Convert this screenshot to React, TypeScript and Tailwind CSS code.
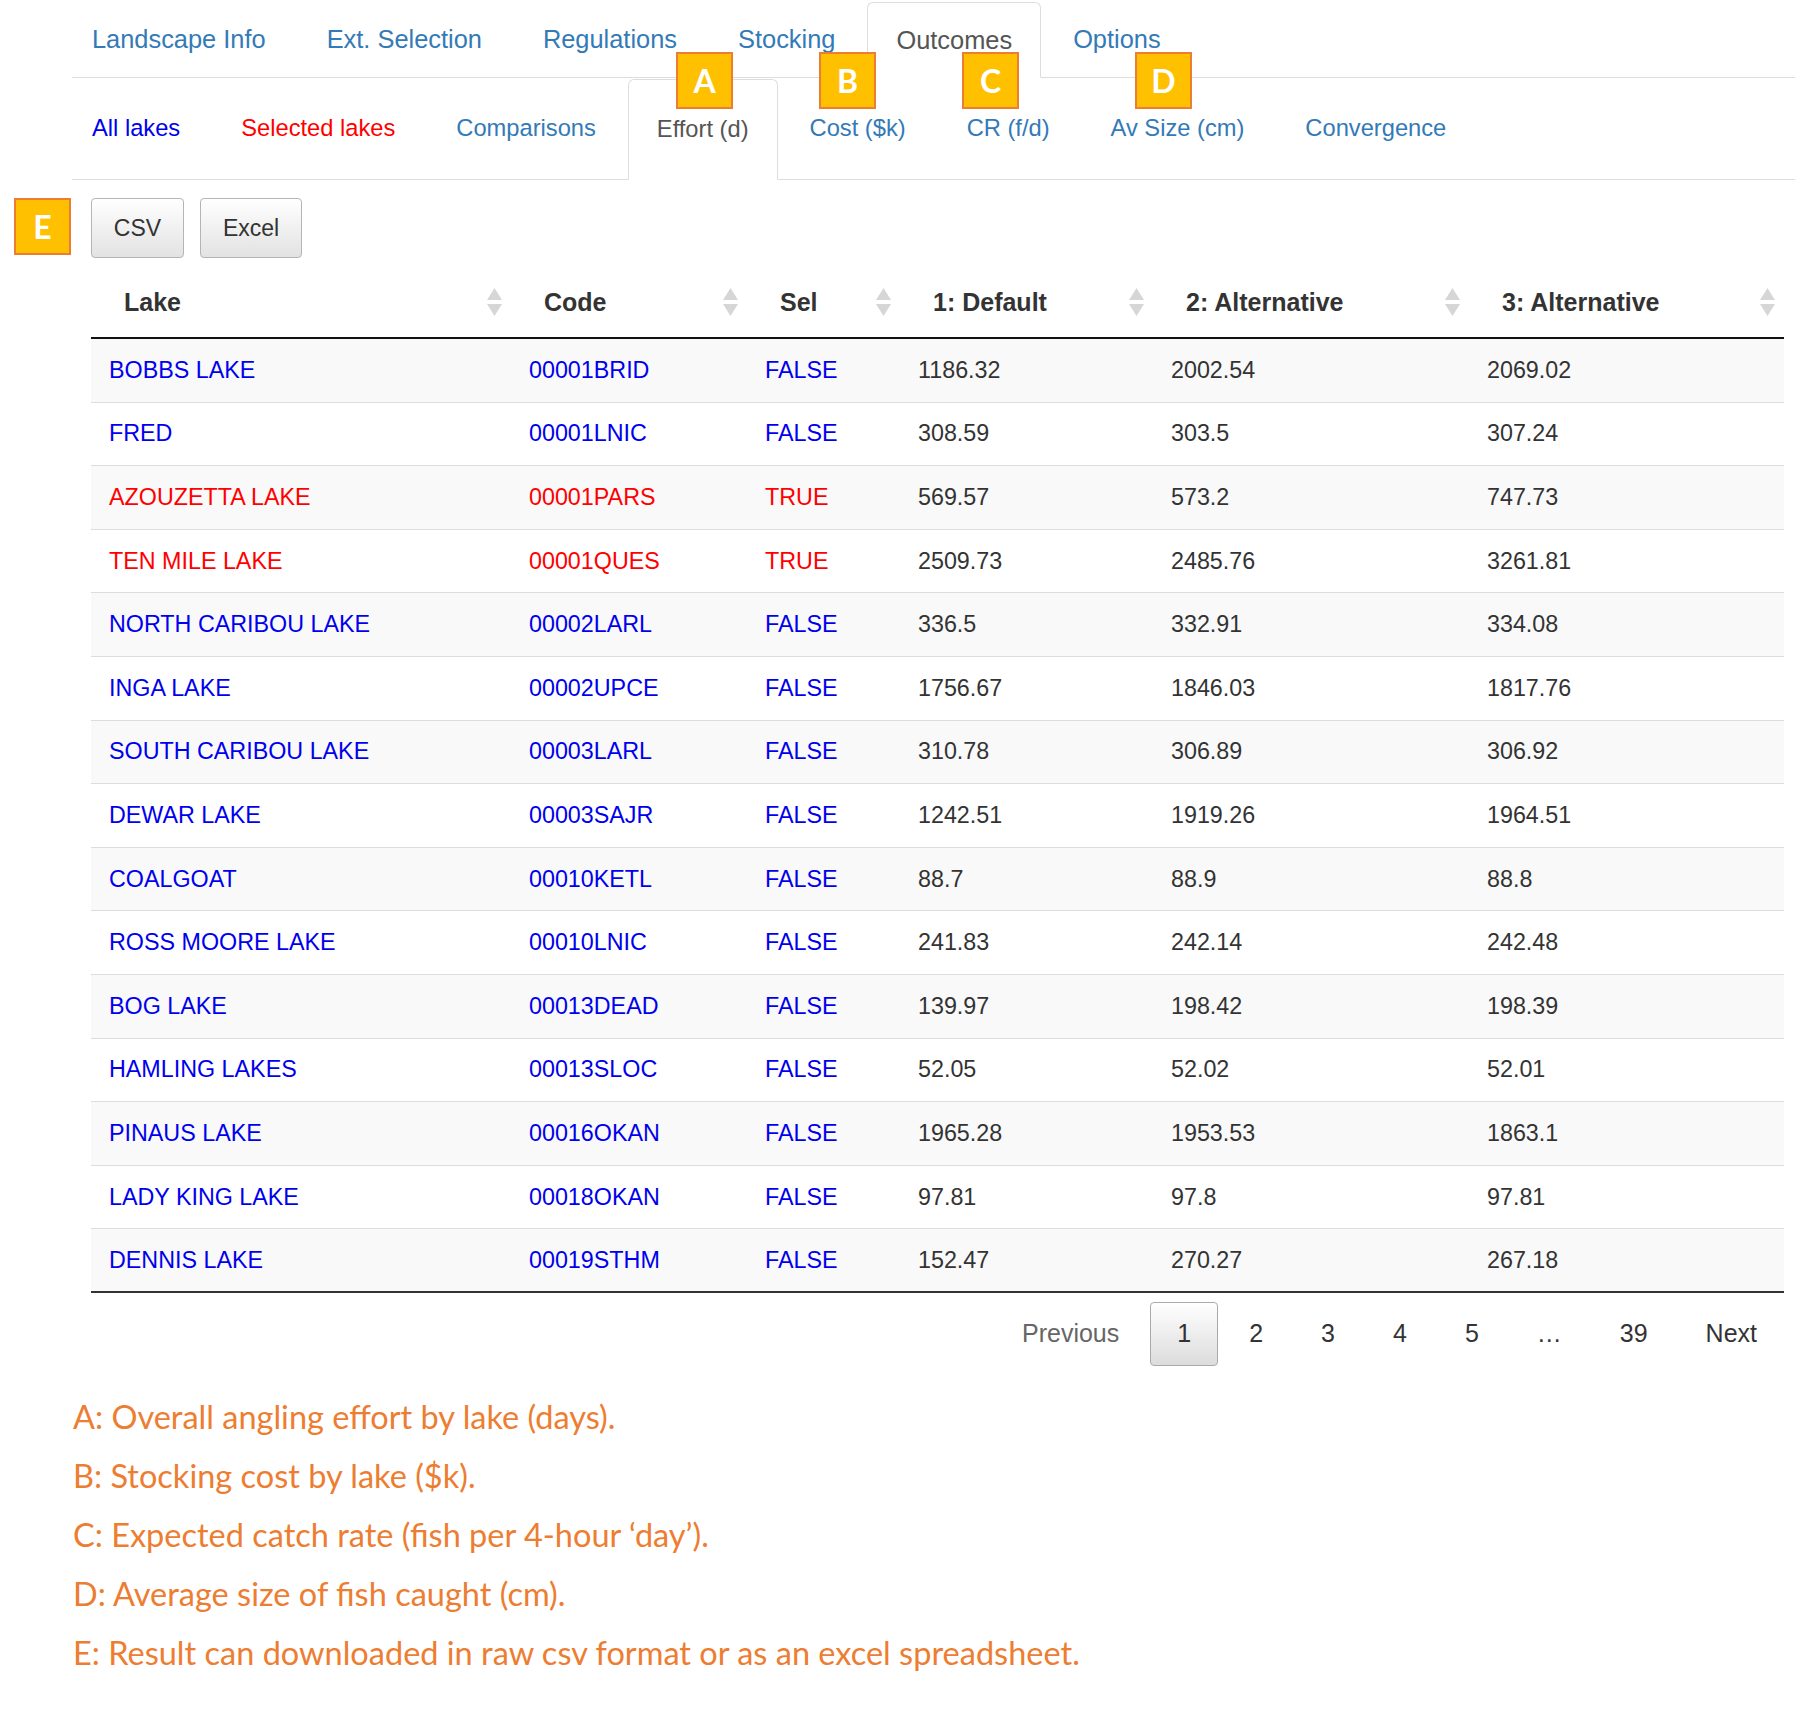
import React from 'react';

type Row = {
  lake: string;
  code: string;
  sel: boolean;
  v1: string;
  v2: string;
  v3: string;
};

const rows: Row[] = [
  { lake: 'BOBBS LAKE', code: '00001BRID', sel: false, v1: '1186.32', v2: '2002.54', v3: '2069.02' },
  { lake: 'FRED', code: '00001LNIC', sel: false, v1: '308.59', v2: '303.5', v3: '307.24' },
  { lake: 'AZOUZETTA LAKE', code: '00001PARS', sel: true, v1: '569.57', v2: '573.2', v3: '747.73' },
  { lake: 'TEN MILE LAKE', code: '00001QUES', sel: true, v1: '2509.73', v2: '2485.76', v3: '3261.81' },
  { lake: 'NORTH CARIBOU LAKE', code: '00002LARL', sel: false, v1: '336.5', v2: '332.91', v3: '334.08' },
  { lake: 'INGA LAKE', code: '00002UPCE', sel: false, v1: '1756.67', v2: '1846.03', v3: '1817.76' },
  { lake: 'SOUTH CARIBOU LAKE', code: '00003LARL', sel: false, v1: '310.78', v2: '306.89', v3: '306.92' },
  { lake: 'DEWAR LAKE', code: '00003SAJR', sel: false, v1: '1242.51', v2: '1919.26', v3: '1964.51' },
  { lake: 'COALGOAT', code: '00010KETL', sel: false, v1: '88.7', v2: '88.9', v3: '88.8' },
  { lake: 'ROSS MOORE LAKE', code: '00010LNIC', sel: false, v1: '241.83', v2: '242.14', v3: '242.48' },
  { lake: 'BOG LAKE', code: '00013DEAD', sel: false, v1: '139.97', v2: '198.42', v3: '198.39' },
  { lake: 'HAMLING LAKES', code: '00013SLOC', sel: false, v1: '52.05', v2: '52.02', v3: '52.01' },
  { lake: 'PINAUS LAKE', code: '00016OKAN', sel: false, v1: '1965.28', v2: '1953.53', v3: '1863.1' },
  { lake: 'LADY KING LAKE', code: '00018OKAN', sel: false, v1: '97.81', v2: '97.8', v3: '97.81' },
  { lake: 'DENNIS LAKE', code: '00019STHM', sel: false, v1: '152.47', v2: '270.27', v3: '267.18' },
];

const topTabs = ['Landscape Info', 'Ext. Selection', 'Regulations', 'Stocking', 'Outcomes', 'Options'];

const notes = [
  'A: Overall angling effort by lake (days).',
  'B: Stocking cost by lake ($k).',
  'C: Expected catch rate (fish per 4-hour \u2018day\u2019).',
  'D: Average size of fish caught (cm).',
  'E: Result can downloaded in raw csv format or as an excel spreadsheet.',
];

const cols = 'grid grid-cols-[420px_236px_153px_253px_316px_315px]';

function SortIcon() {
  return (
    <svg className="absolute right-[9px] top-1/2 -translate-y-1/2" width="15" height="28" viewBox="0 0 15 28">
      <path d="M7.5 0 L15 12 L0 12 Z" fill="#d6d6d6" />
      <path d="M0 16 L15 16 L7.5 28 Z" fill="#d6d6d6" />
    </svg>
  );
}

function Badge({ letter, className }: { letter: string; className: string }) {
  return (
    <div
      className={`absolute flex h-[57px] w-[57px] items-center justify-center border-2 border-[#ed7d31] bg-[#ffc000] font-['Lato',sans-serif] text-[32px] font-bold text-white ${className}`}
    >
      {letter}
    </div>
  );
}

export default function App() {
  return (
    <div className="relative h-[1712px] w-[1807px] bg-white font-['Liberation_Sans',Arial,sans-serif] text-[#333]">
      {/* main tabs */}
      <div className="ml-[72px] mr-[12px] flex h-[78px] items-end border-b border-[#ddd]">
        <div className="-ml-[9px] flex items-end">
          {topTabs.map((t) =>
            t === 'Outcomes' ? (
              <div
                key={t}
                className="-mb-px mr-[3px] flex h-[76px] items-center rounded-t-[6px] border border-[#ddd] border-b-white bg-white px-[28px] text-[25.4px] text-[#555]"
              >
                {t}
              </div>
            ) : (
              <div key={t} className="mr-[3px] flex h-[75px] items-center px-[29px] text-[25.4px] text-[#337ab7]">
                {t}
              </div>
            )
          )}
        </div>
      </div>

      {/* outcome sub tabs */}
      <div className="ml-[72px] mr-[12px] flex h-[102px] items-end border-b border-[#ddd]">
        <div className="-ml-[9px] flex items-end text-[23.7px]">
          <div className="mr-[3px] flex h-[100px] items-center px-[29px] text-[#0000ee]">All lakes</div>
          <div className="mr-[3px] flex h-[100px] items-center px-[29px] text-[#ff0000]">Selected lakes</div>
          <div className="mr-[3px] flex h-[100px] items-center px-[29px] text-[#337ab7]">Comparisons</div>
          <div className="-mb-px mr-[3px] flex h-[101px] items-center rounded-t-[6px] border border-[#ddd] border-b-white bg-white px-[28px] text-[#555]">
            Effort (d)
          </div>
          <div className="mr-[3px] flex h-[100px] items-center px-[29px] text-[#337ab7]">Cost ($k)</div>
          <div className="mr-[3px] flex h-[100px] items-center px-[29px] text-[#337ab7]">CR (f/d)</div>
          <div className="mr-[3px] flex h-[100px] items-center px-[29px] text-[#337ab7]">Av Size (cm)</div>
          <div className="mr-[3px] flex h-[100px] items-center px-[29px] text-[#337ab7]">Convergence</div>
        </div>
      </div>

      {/* export buttons */}
      <div className="ml-[91px] mt-[18px] flex gap-[16px]">
        <button className="h-[60px] w-[93px] rounded-[4px] border border-[#b5b5b5] bg-gradient-to-b from-white to-[#e2e2e2] text-[23px] text-[#333]">
          CSV
        </button>
        <button className="h-[60px] w-[102px] rounded-[4px] border border-[#b5b5b5] bg-gradient-to-b from-white to-[#e2e2e2] text-[23px] text-[#333]">
          Excel
        </button>
      </div>

      {/* table */}
      <div className="ml-[91px] mt-[8px] w-[1693px]">
        <div className={`${cols} h-[73px] border-b-2 border-[#111] text-[25px] font-bold text-[#333]`}>
          {['Lake', 'Code', 'Sel', '1: Default', '2: Alternative', '3: Alternative'].map((h) => (
            <div key={h} className="relative flex items-center pl-[33px] pt-[2px]">
              {h}
              <SortIcon />
            </div>
          ))}
        </div>
        {rows.map((r, i) => {
          const tone = r.sel ? 'text-[#ff0000]' : 'text-[#0000ee]';
          const last = i === rows.length - 1;
          return (
            <div
              key={r.code}
              className={`${cols} h-[63.6px] text-[23.3px] ${i % 2 === 0 ? 'bg-[#f9f9f9]' : 'bg-white'} ${
                last ? 'border-b-2 border-[#333]' : 'border-b border-[#ddd]'
              }`}
            >
              <div className={`flex items-center pl-[18px] ${tone}`}>{r.lake}</div>
              <div className={`flex items-center pl-[18px] ${tone}`}>{r.code}</div>
              <div className={`flex items-center pl-[18px] ${tone}`}>{r.sel ? 'TRUE' : 'FALSE'}</div>
              <div className="flex items-center pl-[18px]">{r.v1}</div>
              <div className="flex items-center pl-[18px]">{r.v2}</div>
              <div className="flex items-center pl-[18px]">{r.v3}</div>
            </div>
          );
        })}

        {/* pagination */}
        <div className="mt-[9px] flex justify-end gap-[4px] text-[25px] text-[#333]">
          <span className="flex h-[64px] items-center px-[27px] text-[#666]">Previous</span>
          <span className="flex h-[64px] items-center rounded-[4px] border border-[#aaa] bg-gradient-to-b from-white to-[#dcdcdc] px-[26px]">
            1
          </span>
          {['2', '3', '4', '5'].map((p) => (
            <span key={p} className="flex h-[64px] items-center px-[27px]">
              {p}
            </span>
          ))}
          <span className="flex h-[64px] items-center px-[27px]">…</span>
          <span className="flex h-[64px] items-center px-[27px]">39</span>
          <span className="flex h-[64px] items-center px-[27px]">Next</span>
        </div>
      </div>

      {/* annotation notes */}
      <div className="ml-[73px] mt-[21px] font-['Lato',sans-serif] text-[32.5px] leading-[59px] text-[#ed7d31]">
        {notes.map((n) => (
          <div key={n}>{n}</div>
        ))}
      </div>

      <Badge letter="A" className="left-[676px] top-[52px]" />
      <Badge letter="B" className="left-[819px] top-[52px]" />
      <Badge letter="C" className="left-[962px] top-[52px]" />
      <Badge letter="D" className="left-[1135px] top-[52px]" />
      <Badge letter="E" className="left-[14px] top-[198px]" />
    </div>
  );
}
